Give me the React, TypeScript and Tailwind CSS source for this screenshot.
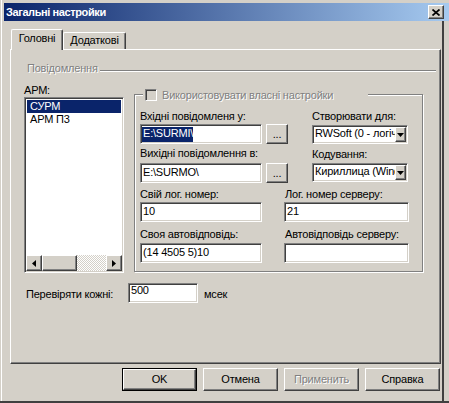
import React from "react";

const raised =
  "border border-t-white border-l-white border-r-[#404040] border-b-[#404040] shadow-[inset_-1px_-1px_0_#808080]";
const sunken =
  "border border-t-[#808080] border-l-[#808080] border-r-white border-b-white shadow-[inset_1px_1px_0_#404040,inset_-1px_-1px_0_#d4d0c8]";
const etched = "text-[#808080] [text-shadow:1px_1px_0_#ffffff]";

function TextBox({ value, w, selected }: { value: string; w: string; selected?: boolean }) {
  return (
    <div className={`${w} h-[20px] bg-white ${sunken} pl-[1px] pt-[2px] overflow-hidden whitespace-nowrap shrink-0`}>
      {selected ? (
        <span className="inline-block bg-[#0a246a] text-white pl-[1px] pb-[2px] leading-[13px]">{value}</span>
      ) : (
        <span className="inline-block pl-[1px] leading-[13px]">{value}</span>
      )}
    </div>
  );
}

function Select({ value }: { value: string }) {
  return (
    <div className={`w-[96px] h-[19px] bg-white ${sunken} p-[1px] flex`}>
      <div className="flex-1 overflow-hidden whitespace-nowrap pl-[1px] leading-[13px]">{value}</div>
      <div className={`w-[11px] h-full bg-[#d4d0c8] ${raised} flex items-center justify-center shrink-0`}>
        <svg width="7" height="4" viewBox="0 0 7 4">
          <polygon points="0,0 7,0 3.5,4" fill="#000" />
        </svg>
      </div>
    </div>
  );
}

function DotsButton() {
  return (
    <div className={`ml-[4px] w-[22px] h-[20px] bg-[#d4d0c8] ${raised} flex items-center justify-center shrink-0`}>
      ...
    </div>
  );
}

function Btn({ label, disabled, def }: { label: string; disabled?: boolean; def?: boolean }) {
  const inner = (
    <div className={`w-full h-full bg-[#d4d0c8] ${raised} flex items-center justify-center ${disabled ? etched : ""}`}>
      {label}
    </div>
  );
  if (def) {
    return <div className="w-[75px] h-[23px] border border-black">{inner}</div>;
  }
  return <div className="w-[75px] h-[23px]">{inner}</div>;
}

export default function App() {
  return (
    <div className="w-[449px] h-[403px] bg-[#d4d0c8] flex flex-col border-b-2 border-b-[#404040] overflow-hidden text-[11px] leading-[13px] tracking-[-0.2px] text-black font-['Liberation_Sans',Arial,sans-serif]">
      <div className="flex-1 ml-[1px] border-l border-l-white flex flex-col min-h-0">
        {/* Title bar */}
        <div className="ml-[2px] mt-[3px] h-[18px] shrink-0 flex items-center justify-between bg-[linear-gradient(to_right,#0a246a,#a6caf0)]">
          <span className="pl-[2px] font-bold text-white tracking-[-0.4px]">Загальні настройки</span>
          <div className={`mr-[5px] w-[16px] h-[14px] bg-[#d4d0c8] ${raised} flex items-center justify-center`}>
            <svg width="8" height="7" viewBox="0 0 8 7">
              <path d="M0.5 0.5L7.5 6.5M7.5 0.5L0.5 6.5" stroke="#000" strokeWidth="1.7" />
            </svg>
          </div>
        </div>

        {/* Body */}
        <div className="flex-1 w-[442px] border-r-2 border-r-[#404040] flex flex-col">
          {/* Tabs */}
          <div className="ml-[8px] mt-[8px] h-[20px] flex items-end shrink-0">
            <div className="relative z-10 ml-[1px] w-[52px] h-[21px] -mb-[1px] bg-[#d4d0c8] border-t border-l border-r border-t-white border-l-white border-r-[#404040] shadow-[inset_-1px_0_0_#808080] rounded-t-[2px] flex justify-center pt-[2px]">
              Головні
            </div>
            <div className="w-[63px] h-[17px] bg-[#d4d0c8] border-t border-l border-r border-t-white border-l-white border-r-[#404040] shadow-[inset_-1px_0_0_#808080] rounded-t-[2px] flex justify-center pt-[1px]">
              Додаткові
            </div>
          </div>

          {/* Panel */}
          <div className={`ml-[8px] w-[431px] h-[315px] shrink-0 ${raised} flex flex-col`}>
            {/* Повідомлення header */}
            <div className="mt-[12px] pl-[16px] pr-[4px] flex items-start">
              <span className={etched}>Повідомлення</span>
              <div className="flex-1 ml-[2px] mt-[8px] h-[2px] border-t border-t-[#808080] border-b border-b-white" />
            </div>

            {/* main row */}
            <div className="mt-[9px] pl-[13px] flex items-start">
              {/* АРМ list */}
              <div className="w-[100px] flex flex-col">
                <div className="h-[13px]">АРМ:</div>
                <div className={`h-[176px] bg-white ${sunken} p-[1px] flex flex-col`}>
                  <div className="flex-1 pt-[1px] px-[1px]">
                    <div className="h-[13px] bg-[#0a246a] text-white pl-[3px]">СУРМ</div>
                    <div className="h-[13px] pl-[3px]">АРМ П3</div>
                  </div>
                  <div className="h-[16px] flex">
                    <div className={`w-[16px] h-full bg-[#d4d0c8] ${raised} flex items-center justify-center`}>
                      <svg width="4" height="7" viewBox="0 0 4 7">
                        <polygon points="4,0 4,7 0,3.5" fill="#000" />
                      </svg>
                    </div>
                    <div className={`w-[35px] h-full bg-[#d4d0c8] ${raised}`} />
                    <div className="flex-1 bg-[image:repeating-conic-gradient(#ffffff_0_25%,#d4d0c8_0_50%)] bg-[length:2px_2px]" />
                    <div className={`w-[16px] h-full bg-[#d4d0c8] ${raised} flex items-center justify-center`}>
                      <svg width="4" height="7" viewBox="0 0 4 7">
                        <polygon points="0,0 0,7 4,3.5" fill="#000" />
                      </svg>
                    </div>
                  </div>
                </div>
              </div>

              {/* Group box */}
              <div className="ml-[10px] mt-[10px] w-[289px] h-[178px] border border-[#808080] shadow-[inset_1px_1px_0_#ffffff,1px_1px_0_#ffffff] flex flex-col">
                <div className="-mt-[6px] ml-[8px] w-[225px] h-[12px] bg-[#d4d0c8] flex items-center pl-[2px] shrink-0">
                  <div className={`w-[12px] h-[12px] bg-[#d4d0c8] ${sunken} shrink-0`} />
                  <span className={`ml-[5px] whitespace-nowrap ${etched}`}>Використовувати власні настройки</span>
                </div>

                {/* block 1 */}
                <div className="mt-[9px] pl-[5px] flex">
                  <div className="w-[148px] flex flex-col">
                    <div className="h-[13px] whitespace-nowrap">Вхідні повідомленя у:</div>
                    <div className="mt-[1px] flex">
                      <TextBox w="w-[122px]" value="E:\SURMI\" selected />
                      <DotsButton />
                    </div>
                    <div className="mt-[3px] h-[13px] whitespace-nowrap">Вихідні повідомлення в:</div>
                    <div className="mt-[3px] flex">
                      <TextBox w="w-[122px]" value="E:\SURMO\" />
                      <DotsButton />
                    </div>
                  </div>
                  <div className="ml-[24px] w-[96px] flex flex-col">
                    <div className="h-[13px] whitespace-nowrap">Створювати для:</div>
                    <div className="mt-[2px]">
                      <Select value="RWSoft (0 - логічний номер)" />
                    </div>
                    <div className="mt-[4px] h-[13px] whitespace-nowrap">Кодування:</div>
                    <div className="mt-[2px]">
                      <Select value="Кириллица (Windows)" />
                    </div>
                  </div>
                </div>

                {/* block 2 */}
                <div className="mt-[5px] pl-[5px] flex">
                  <div className="w-[122px] flex flex-col">
                    <div className="h-[13px] whitespace-nowrap">Свій лог. номер:</div>
                    <div className="mt-[1px]">
                      <TextBox w="w-[122px]" value="10" />
                    </div>
                    <div className="mt-[6px] h-[13px] whitespace-nowrap">Своя автовідповідь:</div>
                    <div className="mt-[2px]">
                      <TextBox w="w-[122px]" value="(14 4505 5)10" />
                    </div>
                  </div>
                  <div className="ml-[22px] w-[125px] flex flex-col">
                    <div className="h-[13px] pl-[1px] whitespace-nowrap">Лог. номер серверу:</div>
                    <div className="mt-[1px]">
                      <TextBox w="w-[125px]" value="21" />
                    </div>
                    <div className="mt-[6px] h-[13px] pl-[1px] whitespace-nowrap">Автовідповідь серверу:</div>
                    <div className="mt-[2px]">
                      <TextBox w="w-[125px]" value="" />
                    </div>
                  </div>
                </div>
              </div>
            </div>

            {/* Перевіряти */}
            <div className="mt-[10px] pl-[15px] h-[20px] flex items-start">
              <div className="w-[102px] mt-[5px] whitespace-nowrap">Перевіряти кожні:</div>
              <div className={`w-[70px] h-[20px] bg-white ${sunken} pl-[2px] pt-0 leading-[13px]`}>500</div>
              <div className="ml-[6px] mt-[5px]">мсек</div>
            </div>
          </div>

          {/* Buttons */}
          <div className="mt-[4px] pr-[2px] flex justify-end gap-[6px] shrink-0">
            <Btn label="OK" def />
            <Btn label="Отмена" />
            <Btn label="Применить" disabled />
            <Btn label="Справка" />
          </div>
        </div>
      </div>
    </div>
  );
}
